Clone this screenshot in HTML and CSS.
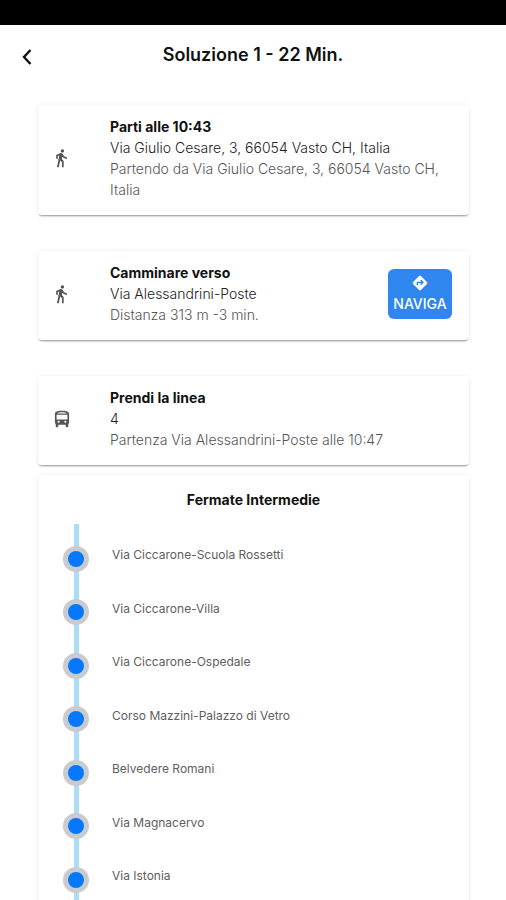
FILE: index.html
```html
<!DOCTYPE html>
<html lang="it">
<head>
<meta charset="utf-8">
<meta name="viewport" content="width=device-width, initial-scale=1">
<title>Soluzione 1</title>
<link rel="stylesheet" href="styles.css">
</head>
<body>
<div class="status-bar"></div>
<header class="header">
  <button class="back" type="button" aria-label="Indietro">
    <svg width="12" height="18" viewBox="0 0 12 18" aria-hidden="true"><path d="M9.500 2 3 9l6.500 7" fill="none" stroke="#111" stroke-width="2.400"/></svg>
  </button>
  <h1 class="title">Soluzione 1 - 22 Min.</h1>
</header>
<main class="steps">
  <section class="card step">
    <svg class="icon" viewBox="1 0 24 24" aria-hidden="true"><path d="M13.500 5.500c1.100 0 2-.9 2-2s-.9-2-2-2-2 .9-2 2 .9 2 2 2zM9.800 8.900 7 23h2.100l1.800-8 2.100 2v6h2v-7.500l-2.100-2 .6-3C14.800 12 16.800 13 19 13v-2c-1.900 0-3.500-1-4.300-2.400l-1-1.600c-.4-.6-1-1-1.700-1-.3 0-.5.100-.8.100L6 8.300V13h2V9.600l1.800-.7"/></svg>
    <div class="text">
      <h2 class="name">Parti alle 10:43</h2>
      <p class="place">Via Giulio Cesare, 3, 66054 Vasto CH, Italia</p>
      <p class="detail">Partendo da Via Giulio Cesare, 3, 66054 Vasto CH, Italia</p>
    </div>
  </section>
  <section class="card step">
    <svg class="icon" viewBox="1 0 24 24" aria-hidden="true"><path d="M13.500 5.500c1.100 0 2-.9 2-2s-.9-2-2-2-2 .9-2 2 .9 2 2 2zM9.800 8.900 7 23h2.100l1.800-8 2.100 2v6h2v-7.500l-2.100-2 .6-3C14.800 12 16.800 13 19 13v-2c-1.900 0-3.500-1-4.300-2.400l-1-1.600c-.4-.6-1-1-1.700-1-.3 0-.5.100-.8.100L6 8.300V13h2V9.600l1.800-.7"/></svg>
    <div class="text">
      <h2 class="name">Camminare verso</h2>
      <p class="place">Via Alessandrini-Poste</p>
      <p class="detail">Distanza 313 m -3 min.</p>
    </div>
    <button class="navigate" type="button">
      <svg width="16" height="16" viewBox="0 0 24 24" aria-hidden="true"><path fill="#fff" d="m22.400 10.600-9-9a2 2 0 0 0-2.800 0l-9 9a2 2 0 0 0 0 2.800l9 9a2 2 0 0 0 2.800 0l9-9a2 2 0 0 0 0-2.800z"/><path d="M8 15v-4h7M13 7.500l3.500 3.500-3.500 3.500" fill="none" stroke="#2e86ee" stroke-width="2"/></svg>
      <span>NAVIGA</span>
    </button>
  </section>
  <section class="card step">
    <svg class="icon" viewBox="0 0 24 24" aria-hidden="true"><path fill-rule="evenodd" d="M12 2C8 2 3.500 2.500 3.500 6v10c0 .9.400 1.700 1 2.200V21c0 .6.400 1 1 1h1c.6 0 1-.4 1-1v-2h9v2c0 .6.400 1 1 1h1c.6 0 1-.4 1-1v-2.800c.6-.5 1-1.300 1-2.200V6c0-3.500-4.500-4-8.500-4zM6 5.500h12c-.8-1-3-1.500-6-1.500s-5.200.5-6 1.500zM5.500 7V12.500h13V7zM8 14a1.300 1.300 0 1 0 0 2.600 1.300 1.300 0 0 0 0-2.600zm8 0a1.300 1.300 0 1 0 0 2.600 1.300 1.300 0 0 0 0-2.600z"/></svg>
    <div class="text">
      <h2 class="name">Prendi la linea</h2>
      <p class="place">4</p>
      <p class="detail">Partenza Via Alessandrini-Poste alle 10:47</p>
    </div>
  </section>
  <section class="card stops">
    <h2 class="name stops-title">Fermate Intermedie</h2>
    <ol class="stop-list">
      <li class="stop"><span class="dot"></span><span class="stop-name">Via Ciccarone-Scuola Rossetti</span></li>
      <li class="stop"><span class="dot"></span><span class="stop-name">Via Ciccarone-Villa</span></li>
      <li class="stop"><span class="dot"></span><span class="stop-name">Via Ciccarone-Ospedale</span></li>
      <li class="stop"><span class="dot"></span><span class="stop-name">Corso Mazzini-Palazzo di Vetro</span></li>
      <li class="stop"><span class="dot"></span><span class="stop-name">Belvedere Romani</span></li>
      <li class="stop"><span class="dot"></span><span class="stop-name">Via Magnacervo</span></li>
      <li class="stop"><span class="dot"></span><span class="stop-name">Via Istonia</span></li>
    </ol>
  </section>
</main>
</body>
</html>
```
FILE: styles.css
```css
* { box-sizing: border-box; }

body {
  margin: 0;
  background: #fff;
  color: #111;
  font-family: Inter, "Liberation Sans", sans-serif;
  font-size: 14px;
  line-height: 21px;
}

h1, h2, p, ol { margin: 0; padding: 0; }

button {
  border: 0;
  padding: 0;
  font: inherit;
  cursor: pointer;
}

.status-bar { height: 25px; background: #000; }

.header {
  display: grid;
  grid-template-columns: 54px 1fr 54px;
  align-items: center;
  height: 60px;
}

.back {
  display: flex;
  align-items: center;
  justify-content: center;
  height: 48px;
  margin-top: 4px;
  background: none;
}

.title {
  text-align: center;
  font-size: 18px;
  font-weight: 600;
  line-height: 24px;
}

.steps {
  display: flex;
  flex-direction: column;
  gap: 36px;
  padding: 20px 37px 0 38px;
}

.card {
  border-radius: 4px;
  background: #fff;
  box-shadow: 0 2px 2px -1px rgba(0, 0, 0, 0.4), 0 0 4px rgba(0, 0, 0, 0.08);
}

.step {
  display: flex;
  align-items: center;
  padding: 11px 17px 15px 14px;
}

.icon {
  flex: none;
  width: 20px;
  height: 20px;
  margin-right: 38px;
  fill: #555;
}

.text { flex: 1; }

.name { font-size: 14px; font-weight: 700; line-height: 21px; }

.place { color: #222; font-weight: 300; }

.detail { color: #555; font-weight: 300; }

.navigate {
  display: flex;
  flex-direction: column;
  align-items: center;
  justify-content: center;
  gap: 2px;
  width: 64px;
  height: 50px;
  padding-top: 2px;
  border-radius: 6px;
  background: #2e86ee;
  color: #fff;
  font-weight: 500;
}

.stops { margin-top: -26px; }

.stops-title { padding: 14px 0; text-align: center; }

.stop-list {
  display: grid;
  grid-auto-rows: 53px 54px;
  padding: 8px 24px 0 25px;
  background: linear-gradient(#abdcf9, #abdcf9) 36px 0 / 5px 100% no-repeat;
  list-style: none;
}

.stop { display: flex; align-items: center; gap: 23px; }

.dot {
  flex: none;
  width: 26px;
  height: 26px;
  border: 5px solid #c9cbce;
  border-radius: 50%;
  background: #0578fb;
}

.stop-name {
  padding-bottom: 8px;
  color: #606060;
  font-size: 12px;
}
```
